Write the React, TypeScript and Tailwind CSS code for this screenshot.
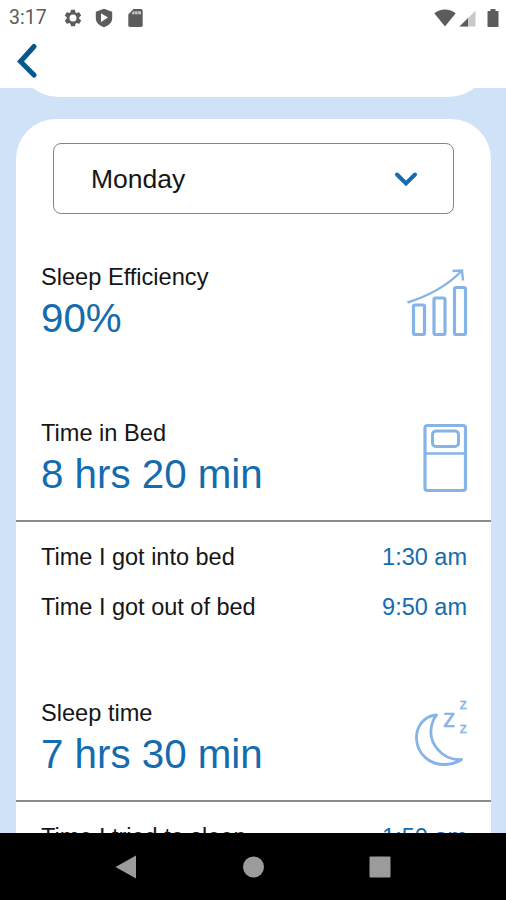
import React from 'react';

interface RowProps {
    label: string;
    value: string;
}

const StatusBar: React.FC = () => (
    <div className="flex h-9 items-center justify-between pl-[9px] pr-[7px] text-[#5c5c5c]">
        <div className="flex items-center">
            <span className="w-[54px] font-['Roboto',sans-serif] text-[19.5px] leading-9">3:17</span>
            <svg className="h-5 w-5" viewBox="0 0 24 24" fill="currentColor">
                <path
                    fillRule="evenodd"
                    d="M19.4 13c.1-.3.1-.7.1-1s0-.7-.1-1l2.1-1.6c.2-.1.2-.4.1-.6l-2-3.5c-.1-.2-.4-.3-.6-.2l-2.5 1c-.5-.4-1.1-.7-1.7-1l-.4-2.6c0-.3-.2-.5-.5-.5h-4c-.3 0-.4.2-.5.4l-.3 2.7c-.6.2-1.2.6-1.7 1l-2.5-1c-.2-.1-.5 0-.6.2l-2 3.5c-.1.2 0 .5.1.6L4.5 11c0 .3-.1.7-.1 1s0 .7.1 1l-2.1 1.6c-.2.1-.2.4-.1.6l2 3.5c.1.2.4.3.6.2l2.5-1c.5.4 1.1.7 1.7 1l.4 2.7c0 .2.2.4.5.4h4c.3 0 .5-.2.5-.4l.4-2.7c.6-.2 1.1-.6 1.7-1l2.5 1c.2.1.5 0 .6-.2l2-3.5c.1-.2.1-.5-.1-.6zM12 16.200a4.200 4.200 0 1 1 0-8.400 4.200 4.200 0 0 1 0 8.400z"
                />
            </svg>
            <svg className="ml-[11px] h-5 w-5" viewBox="0 0 20 20" fill="currentColor">
                <path
                    fillRule="evenodd"
                    d="M10 .8 18.200 3.800V10c0 4.600-3.300 7.700-8.200 9.200C5.100 17.700 1.800 14.600 1.800 10V3.800zM7 5.300v8.600l7-4.300z"
                />
            </svg>
            <svg className="ml-[14px] h-[18px] w-[15px]" viewBox="0 0 15 18">
                <path
                    fill="currentColor"
                    d="M5.500 0H13q1.700 0 1.700 1.700v14.600q0 1.700-1.700 1.700H2q-1.700 0-1.700-1.700V5.500z"
                />
                <path d="M5 2.200h8v3H3.500z" fill="#c4c4c4" />
                <path d="M6.700 2v3.400M9.700 2v3.400" stroke="currentColor" strokeWidth=".5" />
            </svg>
        </div>
        <div className="flex items-center">
            <svg className="h-[18px] w-[22px]" viewBox="0 0 22 18" fill="currentColor">
                <path d="M.3 4.300Q4.800.5 11 .5t10.700 3.800L11 17.500z" />
            </svg>
            <svg className="ml-[3px] h-[17px] w-[17px]" viewBox="0 0 17 17">
                <path d="M16.500.5v16H.5z" fill="#c9c9c9" />
                <path d="M9 8v8.500H.5z" fill="currentColor" />
            </svg>
            <svg className="ml-[11px] h-[18px] w-[12px]" viewBox="0 0 12 18" fill="currentColor">
                <path d="M3.500 0h5v2H11q.5 0 .5.700v14.600q0 .7-.7.700H1.200q-.7 0-.7-.7V2.700Q.5 2 1.200 2h2.300z" />
            </svg>
        </div>
    </div>
);

const ChartIcon: React.FC = () => (
    <svg className="h-[72px] w-[64px]" viewBox="0 0 64 72" fill="none" stroke="#86b4e7" strokeWidth="3.2">
        <rect x="9.500" y="39" width="11" height="29.500" rx="1.500" />
        <rect x="30" y="32" width="11" height="36.500" rx="1.500" />
        <rect x="50.500" y="21.500" width="11" height="47" rx="1.500" />
        <path d="M3.500 36.500Q37 26 57 5.500M48.500 5l9.500-.5 1 10" strokeWidth="2.400" />
    </svg>
);

const BedIcon: React.FC = () => (
    <svg className="h-[72px] w-[46px]" viewBox="0 0 46 72" fill="none" stroke="#86b4e7" strokeWidth="3.2">
        <rect x="3" y="3.500" width="40.500" height="65" rx="2.500" />
        <rect x="10.500" y="9" width="26" height="15.500" rx="3.500" strokeWidth="3" />
        <path d="M3 31.500H43.500" strokeWidth="2.600" />
    </svg>
);

const MoonIcon: React.FC = () => (
    <svg
        className="h-[80px] w-[56px] font-['Liberation_Sans',Arial,sans-serif]"
        viewBox="0 -2 56 80"
        fill="none"
        stroke="#86b4e7"
    >
        <path
            d="M24.500 15C10 16 4 29 4.500 39c1 15 13 25.500 27 25.500 7 0 13-1.500 18-5C32 61 14.500 44 20 24q1.500-5.500 4.500-9z"
            strokeWidth="2.800"
            strokeLinejoin="round"
        />
        <g fill="#86b4e7" strokeWidth=".4">
            <text x="31" y="27" fontSize="25">z</text>
            <text x="47.500" y="9" fontSize="15">z</text>
            <text x="47.500" y="33" fontSize="15">z</text>
        </g>
    </svg>
);

const Stat: React.FC<RowProps & { icon: React.ReactNode }> = ({ label, value, icon }) => (
    <div className="flex h-20 items-center justify-between pl-[25px] pr-[23px]">
        <div>
            <p className="text-[23.6px] leading-[30px]">{label}</p>
            <p className="mt-[2px] pt-px text-[40.3px] leading-[47px] text-[#146cae]">{value}</p>
        </div>
        {icon}
    </div>
);

const Row: React.FC<RowProps> = ({ label, value }) => (
    <div className="flex justify-between pl-[25px] pr-6 text-[23.5px] leading-[30px]">
        <span>{label}</span>
        <span className="text-[#146cae]">{value}</span>
    </div>
);

const Divider: React.FC = () => <div className="h-[2px] bg-[#8a8a8a]" />;

const App: React.FC = () => {
    return (
        <div className="flex h-[900px] w-[506px] flex-col overflow-hidden bg-[#d0e2f7] font-['Liberation_Sans',Arial,sans-serif] text-[#161616]">
            <header className="h-[88px] shrink-0 bg-white">
                <StatusBar />
                <button type="button" aria-label="Back" className="ml-[15px] mt-[7px] block">
                    <svg className="h-9 w-6" viewBox="0 0 24 36" fill="none" stroke="#06578c" strokeWidth="5" strokeLinecap="round">
                        <path d="M19 3.500 5.500 18.500 19 32" />
                    </svg>
                </button>
            </header>

            <main className="min-h-0 flex-1 overflow-hidden pl-4 pr-[15px]">
                {/* bottom edge of the previous card */}
                <div className="-mt-[71px] h-20 rounded-b-[43px] bg-white" />

                <section className="mt-[22px] h-[800px] rounded-t-[40px] bg-white pt-6">
                    <button
                        type="button"
                        className="mx-[37px] flex h-[71px] w-[401px] items-center justify-between rounded-[8px] border-[1.500px] border-[#858585] pl-[37px] pr-[35px]"
                    >
                        <span className="pt-[2px] text-[26.500px]">Monday</span>
                        <svg className="h-4 w-6" viewBox="0 0 24 16" fill="none" stroke="#146cae" strokeWidth="4" strokeLinecap="round">
                            <path d="m3 3.500 9 9 9-9" />
                        </svg>
                    </button>

                    <div className="mt-12">
                        <Stat label="Sleep Efficiency" value="90%" icon={<ChartIcon />} />
                    </div>

                    <div className="mt-[76px]">
                        <Stat label="Time in Bed" value="8 hrs 20 min" icon={<BedIcon />} />
                    </div>
                    <div className="mt-[22px]">
                        <Divider />
                    </div>
                    <div className="mt-5 space-y-5">
                        <Row label="Time I got into bed" value="1:30 am" />
                        <Row label="Time I got out of bed" value="9:50 am" />
                    </div>

                    <div className="mt-[76px]">
                        <Stat label="Sleep time" value="7 hrs 30 min" icon={<MoonIcon />} />
                    </div>
                    <div className="mt-[22px]">
                        <Divider />
                    </div>
                    <div className="mt-5">
                        <Row label="Time I tried to sleep" value="1:50 am" />
                    </div>
                </section>
            </main>

            <nav className="flex h-[67px] shrink-0 items-center justify-center bg-black">
                <svg className="h-6 w-[276px]" viewBox="0 0 276 24" fill="#9b9b9b">
                    <path d="M21 .5v23L.5 12z" />
                    <circle cx="138.500" cy="12" r="10.500" />
                    <rect x="254.500" y="1.500" width="21" height="21" rx="1" />
                </svg>
            </nav>
        </div>
    );
};

export default App;
